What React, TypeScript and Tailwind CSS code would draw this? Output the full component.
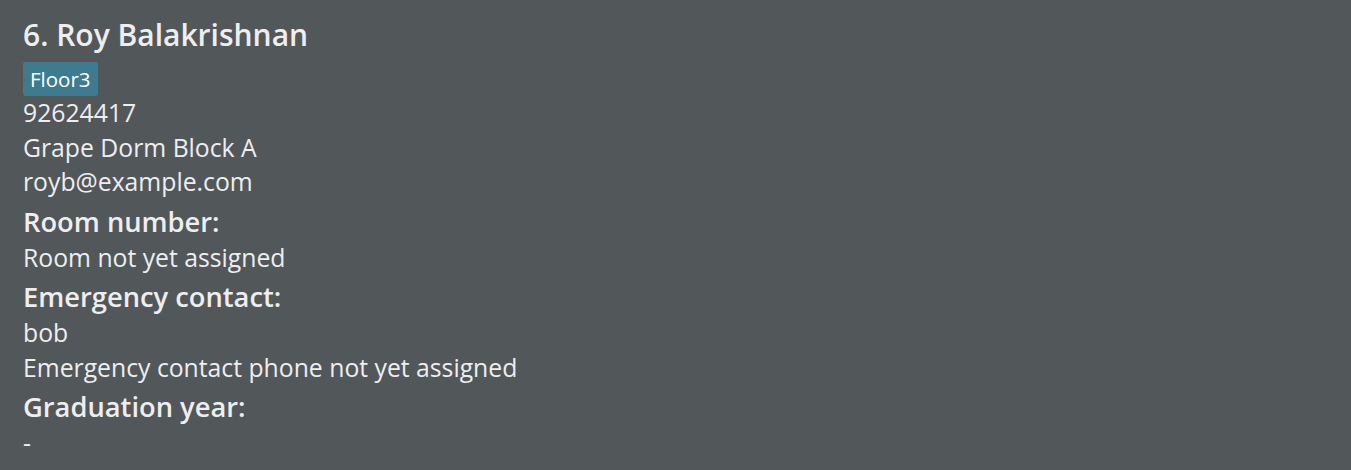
const tagClass =
  'flex h-[34px] items-center rounded-[3px] bg-[#3e7b91] px-[7px] text-[20.5px] text-white';

function Heading({ children }: { children: string }) {
  return <div className="pt-[3px] text-[27.3px] font-semibold leading-[38px]">{children}</div>;
}

function Line({ children }: { children: string }) {
  return <div className="text-[24.75px] leading-[34.5px]">{children}</div>;
}

export default function App() {
  return (
    <div
      className="h-[470px] w-[1351px] bg-[#52575a] pl-[23px] pt-[14px] text-[#eeeeee]"
      style={{ fontFamily: '"Open Sans", "Noto Sans", sans-serif' }}
    >
      <div className="text-[30px] font-semibold leading-[42px]">6. Roy Balakrishnan</div>
      <div className="mt-[6px] flex">
        <span className={tagClass}>Floor3</span>
      </div>
      <Line>92624417</Line>
      <Line>Grape Dorm Block A</Line>
      <Line>royb@example.com</Line>
      <Heading>Room number:</Heading>
      <Line>Room not yet assigned</Line>
      <Heading>Emergency contact:</Heading>
      <Line>bob</Line>
      <Line>Emergency contact phone not yet assigned</Line>
      <Heading>Graduation year:</Heading>
      <Line>-</Line>
    </div>
  );
}
